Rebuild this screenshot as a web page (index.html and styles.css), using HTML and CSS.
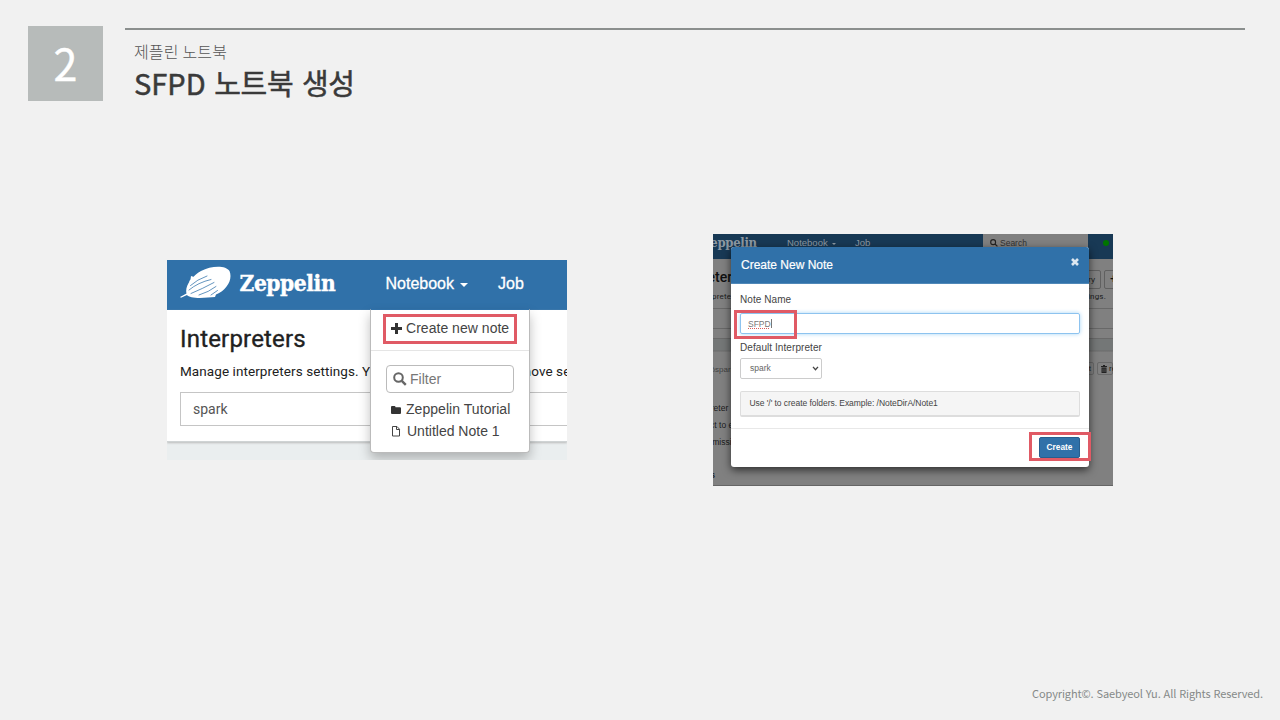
FILE: index.html
```html
<!DOCTYPE html>
<html lang="ko">
<head>
<meta charset="utf-8">
<title>SFPD 노트북 생성</title>
<link rel="stylesheet" href="styles.css">
</head>
<body>
<main class="slide">
  <header class="slide-header">
    <div class="number">2</div>
    <div class="heading">
      <p class="eyebrow">제플린 노트북</p>
      <h1 class="title"><span class="title-latin">SFPD</span> 노트북 생성</h1>
    </div>
  </header>

  <section class="figures">
    <div class="shot notebook">
      <nav class="navbar">
        <svg class="airship" viewBox="0 0 52 34" width="52" height="34">
          <path fill="#fff" d="M0 31 L6.500 27.500 C4.500 20 12 10 21 5 C31 -.5 46 -1 49.500 5 C53 13 47 24 36 28.500 L35 31 L28 31.500 C19 32.500 9 32 7 29 L1 31.800 Z"/>
          <path fill="#fff" d="M11 10l3 1-3 5-2-.5 1.500-2z"/>
          <path fill="none" stroke="#3071a9" stroke-width=".75" stroke-linecap="round" d="M10.500 19.500 Q17 13.500 27 10 M9 24 Q18 16.500 31 13.500 M11 27.500 Q23 22.500 34 16.500 M19 29 Q29 26 36 20.500 M31 29 L37.500 24.500"/>
        </svg>
        <span class="brand">Zeppelin</span>
        <span class="nav-notebook">Notebook</span>
        <i class="caret"></i>
        <span class="nav-job">Job</span>
      </nav>
      <div class="interpreters">
        <h2>Interpreters</h2>
        <p class="manage"><span>Manage interpreters settings. You</span><span class="manage-end">remove settings</span></p>
        <div class="filter-box">spark</div>
      </div>
      <div class="dropdown">
        <div class="menu-create">
          <svg viewBox="0 0 11 11" width="11" height="11"><path fill="#333" d="M4 0h3v4h4v3H7v4H4V7H0V4h4z"/></svg>
          <span>Create new note</span>
        </div>
        <div class="menu-list">
          <div class="menu-filter">
            <svg viewBox="0 0 14 14" width="14" height="14"><g fill="none" stroke="#666" stroke-width="2"><circle cx="5.500" cy="5.500" r="4.300"/><path stroke-width="2.400" d="M8.800 8.800 12.800 12.800"/></g></svg>
            <span>Filter</span>
          </div>
          <div class="menu-item">
            <svg class="folder" viewBox="0 0 10 10" width="10" height="10"><path fill="#333" d="M0 2q0-1 1-1h2.500q1 0 1 1.200H9q1 0 1 1V8q0 1-1 1H1Q0 9 0 8z"/></svg>
            <span>Zeppelin Tutorial</span>
          </div>
          <div class="menu-item note">
            <svg viewBox="0 0 10 12" width="10" height="12"><path fill="none" stroke="#444" d="M1.500 1.500h4.500l2.500 2.700v6.800h-7zM5.500 1.500v3h3"/></svg>
            <span>Untitled Note 1</span>
          </div>
        </div>
      </div>
      <div class="mark mark-menu"></div>
    </div>

    <div class="shot create">
      <div class="backdrop">
        <div class="dim-nav">
          <span class="dim-brand">Zeppelin</span>
          <span class="dim-notebook">Notebook</span><i class="dim-caret"></i>
          <span class="dim-job">Job</span>
          <div class="dim-search"><svg viewBox="0 0 14 14" width="8" height="8"><g fill="none" stroke="#222" stroke-width="2"><circle cx="5.500" cy="5.500" r="4.300"/><path d="M8.800 8.800 13 13"/></g></svg>Search</div>
          <i class="online"></i>
        </div>
        <div class="dim-head">
          <strong>Interpreters</strong>
          <div class="dim-tools"><span class="dim-btn">Repository</span><span class="dim-btn plus">+</span></div>
        </div>
        <div class="dim-manage"><span class="dim-left">interpreters</span><span>settings.</span></div>
        <div class="dim-box"></div>
        <div class="dim-band"></div>
        <div class="dim-row">
          <span class="dim-spark">%spark</span>
          <div class="dim-tools"><span class="dim-small">restart</span><span class="dim-small trash"><svg viewBox="0 0 6 8" width="6" height="8"><path fill="#222" d="M0 1h2V0h2v1h2v1H0zM.5 2.500h5V8h-5z"/><path stroke="#777" stroke-width=".6" d="M2 3.500V7M4 3.500V7"/></svg>remove</span></div>
        </div>
        <p class="dim-line one">Interpreter</p>
        <p class="dim-line two">Connect to existing</p>
        <p class="dim-line three">permission</p>
        <p class="dim-line four">Properties</p>
      </div>
      <div class="modal">
        <div class="modal-head"><span>Create New Note</span>
          <svg viewBox="0 0 8 8" width="8" height="8"><path stroke="#dce7f0" stroke-width="2.600" d="M1 1 7 7M7 1 1 7"/></svg>
        </div>
        <div class="modal-body">
          <label>Note Name</label>
          <div class="name-input"><span>SFPD</span><i class="cursor"></i></div>
          <label class="second">Default Interpreter</label>
          <div class="select"><span>spark</span><svg viewBox="0 0 8 6" width="7" height="5"><path fill="none" stroke="#444" stroke-width="1.600" d="M1 1 4 4.500 7 1"/></svg></div>
          <div class="hint">Use '/' to create folders. Example: /NoteDirA/Note1</div>
        </div>
        <div class="modal-foot"><span class="create-btn">Create</span></div>
      </div>
      <div class="mark mark-name"></div>
      <div class="mark mark-create"></div>
    </div>
  </section>

  <footer class="copyright">Copyright©. Saebyeol Yu. All Rights Reserved.</footer>
</main>
</body>
</html>
```
FILE: styles.css
```css
* { box-sizing: border-box; }
body { margin: 0; font-family: "Liberation Sans", sans-serif; background: #f1f1f1; }
h1, h2, p { margin: 0; }
svg { display: block; flex: none; }
i { display: block; flex: none; }
span, label { white-space: nowrap; }

.slide { width: 1280px; height: 720px; background: #f1f1f1; display: flex; flex-direction: column; overflow: hidden; }
.slide-header { display: flex; height: 101px; padding: 26px 35px 0 28px; gap: 22px; flex: none; }
.number { width: 75px; height: 75px; background: #b7bbba; color: #fff; font: 400 43px/72px "Noto Sans CJK KR", sans-serif; text-align: center; -webkit-text-stroke: .4px #fff; }
.heading { flex: 1; margin-top: 2px; border-top: 2px solid #8b8f8e; padding: 11px 0 0 9px; }
.eyebrow { font: 300 16px/20px "Noto Sans CJK KR", sans-serif; color: #555; letter-spacing: .1px; word-spacing: -.5px; }
.title { font: 400 29px/40px "Noto Sans CJK KR", sans-serif; color: #3a3a3a; margin-top: 1px; letter-spacing: -.3px; word-spacing: .8px; -webkit-text-stroke: .5px #3a3a3a; }
.title-latin { letter-spacing: 0; }

.figures { height: 518px; display: flex; align-items: center; padding-left: 167px; gap: 146px; }
.shot { position: relative; width: 400px; overflow: hidden; flex: none; }
.mark { position: absolute; border: 3px solid #e05a65; }

.notebook { height: 200px; background: #eaeeef; }
.navbar { height: 50px; background: #3071a9; display: flex; align-items: center; color: #fff; padding: 0 0 3px 13px; }
.airship { margin-top: -1px; }
.brand { font: bold 22.5px "DejaVu Serif Condensed", "DejaVu Serif", serif; font-stretch: condensed; letter-spacing: -.4px; width: 145px; margin: -1px 0 0 7.500px; -webkit-text-stroke: .4px #fff; }
.nav-notebook, .nav-job { font-size: 16px; -webkit-text-stroke: .3px #fff; }
.nav-notebook { width: 69px; letter-spacing: 0; margin-left: 1px; }
.caret { border: 4px solid transparent; border-top-color: #fff; border-bottom: 0; margin: 3px 30px 0 5.500px; }
.interpreters { height: 132px; background: #fff; padding: 14px 0 0 13px; border-bottom: 1px solid #cfd3d4; box-shadow: 0 1px 2px #bbb; }
.interpreters h2 { font: 400 24px/30px Roboto, sans-serif; color: #212121; letter-spacing: .18px; -webkit-text-stroke: .35px #212121; }
.manage { display: flex; justify-content: space-between; font: 13.500px/18px Roboto, sans-serif; color: #212121; margin-top: 8px; letter-spacing: .08px; }
.manage-end { margin-right: -38px; }
.filter-box { height: 34px; border: 1px solid #c5c5c5; border-right: 0; margin-top: 12px; padding-left: 12px; font: 14px/33px Roboto, sans-serif; color: #555; }
.dropdown { position: absolute; left: 203px; top: 49px; width: 160px; height: 144px; background: #fff; border: 1px solid #bbb; border-top-color: #3071a9; border-radius: 0 0 4px 4px; box-shadow: 0 6px 12px rgba(0,0,0,.25); color: #444; font-size: 14px; }
.menu-create { height: 41px; border-bottom: 1px solid #e5e5e5; display: flex; align-items: center; gap: 4px; padding: 0 0 4px 20px; letter-spacing: .03px; }
.menu-list { padding: 14px 15px 0; }
.menu-filter { width: 128px; height: 28px; border: 1px solid #bbb; border-radius: 4px; display: flex; align-items: center; gap: 3px; padding-left: 6px; color: #777; margin-bottom: 5px; }
.menu-item { display: flex; align-items: center; gap: 5px; height: 22px; padding-left: 5px; letter-spacing: .05px; }
.menu-item.note { gap: 6px; letter-spacing: 0; }
.folder { margin-top: 2px; }
.mark-menu { left: 216px; top: 54px; width: 134px; height: 30px; }

.create { height: 252px; }
.backdrop { height: 252px; background: #808080; color: #1b1b1b; border-bottom: 1px solid #656565; overflow: hidden; font-size: 8px; }
.dim-nav { height: 25px; background: #183955; display: flex; align-items: flex-start; color: #8c98a2; font-size: 9.500px; }
.dim-brand { font: bold 13px/18px "DejaVu Serif Condensed", "DejaVu Serif", serif; letter-spacing: -.3px; width: 85px; margin-left: -11px; }
.dim-notebook, .dim-job { line-height: 18px; }
.dim-notebook { width: 43px; }
.dim-caret { border: 2px solid transparent; border-top-color: #8c98a2; border-bottom: 0; margin: 9px 19px 0 2px; }
.dim-job { width: 128px; }
.dim-search { width: 105px; height: 18px; background: #808080; display: flex; align-items: center; gap: 2px; padding-left: 7px; color: #303030; font-size: 8.500px; }
.online { width: 6px; height: 6px; border-radius: 50%; background: #007500; margin: 6px 0 0 15px; }
.dim-head { display: flex; height: 31px; padding-top: 8px; justify-content: space-between; font-size: 8px; }
.dim-head strong { font: 500 14px/20px Roboto, sans-serif; color: #101010; margin-left: -47px; letter-spacing: 0; }
.dim-tools { display: flex; gap: 3px; }
.dim-head .dim-tools { margin-top: 3px; }
.dim-btn { height: 19px; border: 1px solid #606060; border-radius: 2px; padding: 0 5px; line-height: 17px; }
.plus { width: 13px; margin-right: -4px; font-size: 12px; font-weight: bold; color: #111; }
.dim-manage { display: flex; justify-content: space-between; height: 18px; padding-right: 7px; line-height: 13px; font-family: Roboto, sans-serif; letter-spacing: .2px; }
.dim-left { margin-left: -18px; }
.dim-box { height: 21px; border: solid #686868; border-width: 1px 0; }
.dim-band { height: 22px; margin-top: 9px; border-top: 1px solid #696969; background: linear-gradient(#747777 11px, #6b6b6b 12px, #808080 13px); }
.dim-row { display: flex; justify-content: space-between; height: 40px; padding-top: 2px; }
.dim-spark { margin-left: -5px; line-height: 16px; color: #404040; }
.dim-small { height: 13px; border: 1px solid #696969; border-radius: 2px; padding: 0 2px; line-height: 11px; display: flex; align-items: center; gap: 2px; }
.trash { width: 16px; padding-left: 3px; }
.dim-line { height: 17px; line-height: 16px; font-size: 8.500px; }
.one { margin-left: -24px; }
.two { margin-left: -28px; }
.three { margin-left: -13px; }
.four { font-weight: bold; padding-top: 16px; margin-left: -40px; }
.modal { position: absolute; left: 18px; top: 13px; width: 358px; height: 220px; background: #fff; border-radius: 3px; box-shadow: 0 3px 9px rgba(0,0,0,.65); overflow: hidden; color: #444; }
.modal-head { height: 37px; background: #3071a9; border-bottom: 1px solid #5088b8; display: flex; justify-content: space-between; padding: 11px 10px 0; color: #fff; font-size: 12px; line-height: 15px; -webkit-text-stroke: .2px #fff; }
.modal-body { height: 145px; border-bottom: 1px solid #e8e8e8; padding: 9px 9px 0; font-size: 10px; }
.modal-body label { display: block; line-height: 13px; letter-spacing: .07px; }
.name-input { height: 21px; border: 1px solid #8dc3ef; border-radius: 2px; box-shadow: 0 0 4px #a9d5f5; display: flex; align-items: center; padding-left: 7px; margin-top: 7px; color: #777; font-size: 8.500px; }
.name-input span { text-decoration: underline dotted #d85a5a 1px; text-underline-offset: 1px; }
.cursor { width: 1px; height: 9px; background: #777; }
.modal-body .second { margin-top: 7px; }
.select { width: 82px; height: 21px; border: 1px solid #ccc; border-radius: 2px; display: flex; align-items: center; justify-content: space-between; padding: 0 2px 1px 9px; margin-top: 4px; color: #666; font-size: 8.500px; }
.hint { height: 26px; border: 1px solid #ddd; border-bottom-width: 2px; border-radius: 2px; background: #f5f5f5; margin-top: 12px; padding-left: 8.500px; font-size: 8.500px; line-height: 23px; letter-spacing: -.05px; }
.modal-foot { display: flex; justify-content: flex-end; padding: 8px 9px 0; }
.create-btn { width: 41px; height: 21px; border: 1px solid #285e8e; border-radius: 2px; background: #3071a9; color: #fff; font-size: 8.300px; font-weight: bold; line-height: 19px; text-align: center; }
.mark-name { left: 21px; top: 76px; width: 63px; height: 29px; }
.mark-create { left: 316px; top: 198px; width: 62px; height: 29px; }

.copyright { font: 11px/14px "Noto Sans CJK KR", sans-serif; color: #858988; text-align: right; padding: 67px 17px 0 0; letter-spacing: -.11px; }
```
